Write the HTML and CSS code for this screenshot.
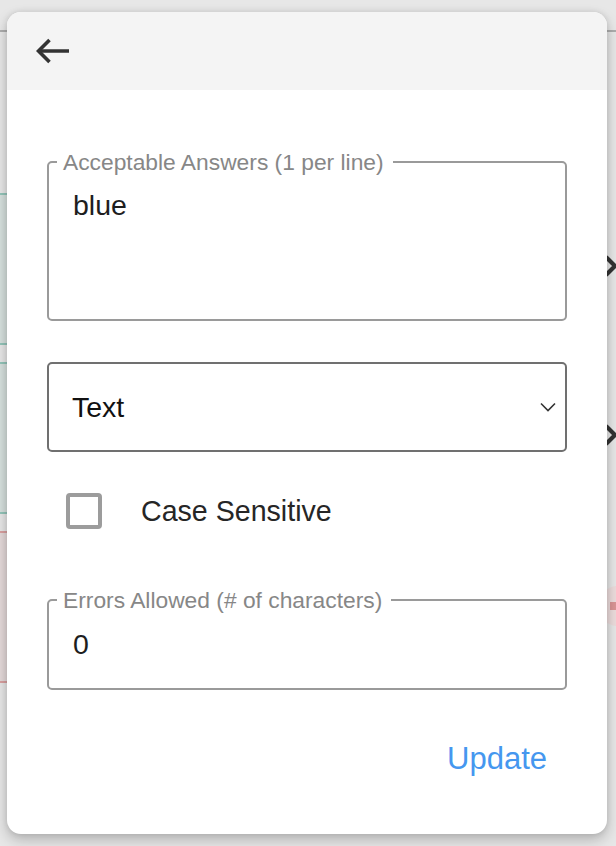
FILE: index.html
```html
<!DOCTYPE html>
<html lang="en">
<head>
<meta charset="utf-8">
<title>Edit answers</title>
<link rel="stylesheet" href="styles.css">
</head>
<body>
<div class="page">
  <div class="topbar"></div>
  <div class="rows">
    <div class="row">
      <div class="card card-green"></div>
      <div class="side">
        <svg class="chev" width="16" height="24" viewBox="0 0 16 24"><path d="M3 3l9 9-9 9" fill="none" stroke="#333" stroke-width="4.2"/></svg>
      </div>
    </div>
    <div class="row">
      <div class="card card-green"></div>
      <div class="side">
        <svg class="chev" width="16" height="24" viewBox="0 0 16 24"><path d="M3 3l9 9-9 9" fill="none" stroke="#333" stroke-width="4.2"/></svg>
      </div>
    </div>
    <div class="row">
      <div class="card card-red"></div>
      <div class="side">
        <span class="del"><span class="del-mark"></span></span>
      </div>
    </div>
  </div>
</div>

<div class="dialog">
  <div class="dialog-head">
    <svg class="back" width="34" height="26" viewBox="0 0 34 26">
      <path d="M2.5 13H33" fill="none" stroke="#333" stroke-width="3.6"/>
      <path d="M13.5 2L2.5 13l11 11" fill="none" stroke="#333" stroke-width="3.6"/>
    </svg>
  </div>
  <div class="dialog-body">
    <fieldset class="field field-answers">
      <legend class="field-label">Acceptable Answers (1 per line)</legend>
      <div class="field-value">blue</div>
    </fieldset>

    <div class="select">
      <span class="select-text">Text</span>
      <svg class="select-caret" width="16" height="10" viewBox="0 0 16 10"><path d="M1 1.5l7 7 7-7" fill="none" stroke="#333" stroke-width="1.6"/></svg>
    </div>

    <div class="check-row">
      <span class="checkbox"></span>
      <span class="check-label">Case Sensitive</span>
    </div>

    <fieldset class="field field-errors">
      <legend class="field-label">Errors Allowed (# of characters)</legend>
      <div class="field-value">0</div>
    </fieldset>

    <div class="actions">
      <button class="btn-update">Update</button>
    </div>
  </div>
</div>
</body>
</html>
```

FILE: styles.css
```css
* { box-sizing: border-box; }

html, body {
  margin: 0;
  padding: 0;
}

body {
  width: 616px;
  height: 846px;
  overflow: hidden;
  background: #e7e7e7;
  font-family: "Liberation Sans", Arial, Helvetica, sans-serif;
  position: relative;
}

.page {
  width: 616px;
}

.topbar {
  height: 32px;
  border-bottom: 2px solid #adadad;
}

.rows {
  padding-top: 161px;
  display: flex;
  flex-direction: column;
  gap: 17px;
}

.row {
  display: flex;
  height: 152px;
}

.card {
  flex: 1;
}

.card-green {
  background: #d6e0dd;
  border-top: 2px solid #93c5b9;
  border-bottom: 2px solid #93c5b9;
}

.card-red {
  background: #e4d9d9;
  border-top: 2px solid #d9a0a0;
  border-bottom: 2px solid #d9a0a0;
}

.side {
  width: 24px;
  display: flex;
  align-items: center;
  justify-content: flex-end;
  position: relative;
}

.chev {
  display: block;
  margin-right: -3px;
  margin-top: -6px;
}

.del {
  width: 40px;
  height: 40px;
  border-radius: 50%;
  background: #ecdcdc;
  display: flex;
  align-items: center;
  justify-content: center;
  margin-right: -22px;
  margin-top: -2px;
}

.del-mark {
  width: 6px;
  height: 8px;
  background: #d99595;
  margin-left: -10px;
}

/* modal dialog */
.dialog {
  position: absolute;
  top: 12px;
  left: 7px;
  width: 600px;
  background: #fff;
  border-radius: 14px;
  overflow: hidden;
  box-shadow: 0 6px 14px rgba(0, 0, 0, 0.22), 0 0 6px rgba(0, 0, 0, 0.10);
}

.dialog-head {
  height: 78px;
  background: #f4f4f4;
  display: flex;
  align-items: center;
  padding-left: 29px;
}

.back {
  display: block;
}

.dialog-body {
  padding: 61px 40px 59px 40px;
  display: flex;
  flex-direction: column;
}

.field {
  margin: 0;
  border: 2px solid #9a9a9a;
  border-radius: 5px;
  padding: 0 24px;
  min-width: 0;
}

.field-label {
  font-size: 22.8px;
  line-height: 22px;
  color: #878787;
  padding: 0 9px 0 6px;
  margin-left: -16px;
}

.field-value {
  font-size: 28.5px;
  line-height: 32px;
  color: #1e1e1e;
}

.field-answers .field-value {
  height: 146px;
  padding-top: 16px;
}

.field-errors .field-value {
  height: 77px;
  padding-top: 17px;
}

.select {
  margin-top: 41px;
  height: 90px;
  border: 2px solid #707070;
  border-radius: 5px;
  display: flex;
  align-items: center;
  justify-content: space-between;
  padding: 0 9px 0 23px;
}

.select-text {
  font-size: 28.5px;
  color: #111;
}

.select-caret {
  display: block;
}

.check-row {
  margin-top: 41px;
  height: 36px;
  display: flex;
  align-items: center;
  padding-left: 19px;
}

.checkbox {
  width: 36px;
  height: 36px;
  border: 4px solid #9c9c9c;
  border-radius: 4px;
  flex: none;
}

.check-label {
  margin-left: 39px;
  font-size: 28.6px;
  color: #262626;
}

.field-errors {
  margin-top: 60px;
}

.actions {
  margin-top: 53px;
  display: flex;
  justify-content: flex-end;
  padding-right: 20px;
}

.btn-update {
  border: none;
  background: none;
  padding: 0;
  font-family: inherit;
  font-size: 31px;
  line-height: 32px;
  color: #4597ef;
  cursor: pointer;
}
```
